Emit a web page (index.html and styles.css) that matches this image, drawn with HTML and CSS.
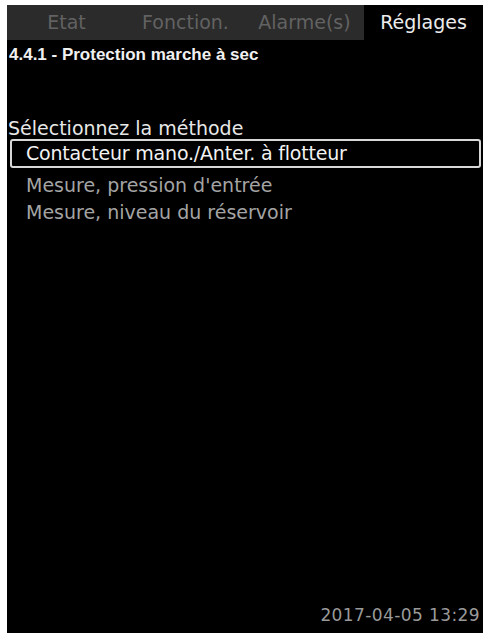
FILE: index.html
```html
<!DOCTYPE html>
<html lang="fr">
<head>
<meta charset="utf-8">
<link rel="stylesheet" href="styles.css">
</head>
<body>
<div class="screen">
  <div class="tabs">
    <div class="tab">Etat</div>
    <div class="tab">Fonction.</div>
    <div class="tab">Alarme(s)</div>
    <div class="tab active">Réglages</div>
  </div>
  <div class="title">4.4.1 - Protection marche à sec</div>
  <div class="content">
    <div class="label">Sélectionnez la méthode</div>
    <ul class="options">
      <li class="option selected">Contacteur mano./Anter. à flotteur</li>
      <li class="option">Mesure, pression d'entrée</li>
      <li class="option">Mesure, niveau du réservoir</li>
    </ul>
  </div>
  <div class="footer">2017-04-05 13:29</div>
</div>
</body>
</html>
```
FILE: styles.css
```css
html, body {
  margin: 0;
  padding: 0;
  background: #ffffff;
}
body {
  padding: 5px 4px 2px 7px;
  width: 487px;
  height: 635px;
  box-sizing: border-box;
  font-family: "DejaVu Sans", sans-serif;
}
.screen {
  width: 476px;
  height: 628px;
  background: #000;
  display: flex;
  flex-direction: column;
  color: #e8e8e8;
}
.tabs {
  display: grid;
  grid-template-columns: repeat(4, 1fr);
  height: 35px;
  background: #2b2b2b;
}
.tab {
  display: flex;
  align-items: center;
  justify-content: center;
  font-size: 19px;
  color: #626262;
  padding-bottom: 2px;
}
.tab.active {
  background: #000;
  color: #ececec;
}
.title {
  font-family: "Liberation Sans Narrow", "Liberation Sans", sans-serif;
  font-weight: bold;
  font-size: 17px;
  color: #f0f0f0;
  padding: 5px 0 0 2px;
  height: 23px;
}
.content {
  flex: 1;
  padding-top: 49px;
}
.label {
  font-size: 19px;
  color: #e8e8e8;
  padding-left: 1px;
  height: 22px;
  line-height: 22px;
}
.options {
  list-style: none;
  margin: 0;
  padding: 0;
}
.option {
  font-size: 19px;
  color: #a4a4a4;
  height: 27px;
  line-height: 27px;
  padding-left: 16px;
  margin: 0 2px 0 3px;
}
.option.selected {
  color: #f2f2f2;
  border: 2px solid #d8d8d8;
  border-radius: 3px;
  height: 25px;
  line-height: 25px;
  padding-left: 14px;
  margin-bottom: 4px;
  letter-spacing: -0.2px;
}
.footer {
  text-align: right;
  font-size: 17px;
  color: #9a9a9a;
  padding: 0 3px 8px 0;
  letter-spacing: 0.4px;
}
```
